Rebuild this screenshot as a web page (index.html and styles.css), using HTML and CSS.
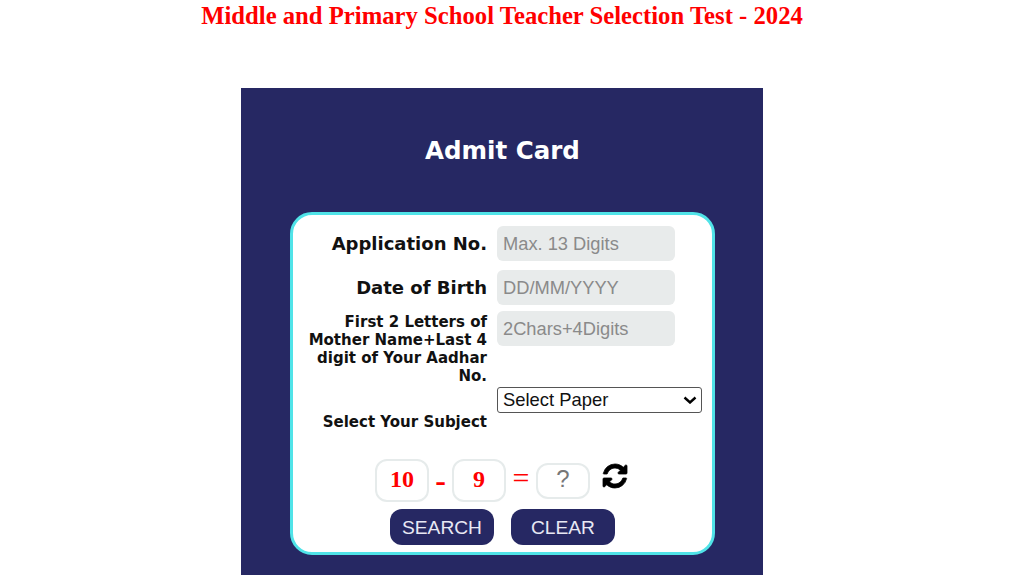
FILE: index.html
```html
<!DOCTYPE html>
<html lang="en">
<head>
  <meta charset="UTF-8" />
  <meta name="viewport" content="width=device-width, initial-scale=1.0"/>
  <title>Admit Card</title>
  <link rel="stylesheet" href="styles.css">
</head>
<body>

  <h1 class="test-title">Middle and Primary School Teacher Selection Test - 2024</h1>

  <div class="panel">
    <h2 class="panel-title">Admit Card</h2>

    <form class="login-box">
      <div class="field field-app">
        <label>Application No.</label>
        <input type="text" placeholder="Max. 13 Digits">
      </div>
      <div class="field field-dob">
        <label>Date of Birth</label>
        <input type="text" placeholder="DD/MM/YYYY">
      </div>
      <div class="field field-pass">
        <label class="small">First 2 Letters of Mother Name+Last 4 digit of Your Aadhar No.</label>
        <input type="text" placeholder="2Chars+4Digits">
      </div>
      <div class="field field-subject">
        <label class="small">Select Your Subject</label>
        <div class="select-wrap">
          <select>
            <option>Select Paper</option>
          </select>
          <svg class="select-arrow" viewBox="0 0 14 8" aria-hidden="true">
            <path d="M1.5 1.5 7 6.5l5.5-5"/>
          </svg>
        </div>
      </div>

      <div class="captcha">
        <span class="cap-num">10</span>
        <span class="cap-op">-</span>
        <span class="cap-num">9</span>
        <span class="cap-eq">=</span>
        <input class="cap-answer" type="text" placeholder="?">
        <svg class="cap-refresh" viewBox="0 0 1792 1792" aria-hidden="true">
          <path d="M1639 1056q0 5-1 7-64 268-268 434.5t-478 166.5q-146 0-282.5-55t-243.5-157l-129 129q-19 19-45 19t-45-19-19-45v-448q0-26 19-45t45-19h448q26 0 45 19t19 45-19 45l-137 137q71 66 161 102t187 36q134 0 250-65t186-179q11-17 53-117 8-23 30-23h192q13 0 22.5 9.5t9.5 22.5zm25-800v448q0 26-19 45t-45 19h-448q-26 0-45-19t-19-45 19-45l138-138q-148-137-349-137-134 0-250 65t-186 179q-11 17-53 117-8 23-30 23h-199q-13 0-22.5-9.5t-9.5-22.5v-7q65-268 270-434.5t480-166.5q146 0 284 55.5t245 156.5l130-129q19-19 45-19t45 19 19 45z"/>
        </svg>
      </div>

      <div class="actions">
        <button type="button">SEARCH</button>
        <button type="button">CLEAR</button>
      </div>
    </form>
  </div>

</body>
</html>
```

FILE: styles.css
```css
* {
  margin: 0;
  padding: 0;
  box-sizing: border-box;
}

body {
  width: 1004px;
  background: #fff;
  font-family: "Liberation Sans", Arial, sans-serif;
}

.test-title {
  font-family: "Liberation Serif", "Times New Roman", serif;
  font-size: 24.7px;
  font-weight: bold;
  line-height: 32px;
  color: #ff0000;
  text-align: center;
  height: 88px;
}

.panel {
  width: 522px;
  margin: 0 auto;
  padding: 47px 48px 40px 49px;
  background: #262863;
}

.panel-title {
  font-family: "DejaVu Sans", Verdana, sans-serif;
  font-size: 24.5px;
  font-weight: bold;
  line-height: 32px;
  color: #fff;
  text-align: center;
  margin-bottom: 45px;
}

.login-box {
  height: 343px;
  padding-top: 11px;
  background: #fff;
  border: 3px solid #50e3e8;
  border-radius: 22px;
}

.field {
  display: flex;
  align-items: flex-start;
  gap: 10px;
  padding-right: 10px;
}

.field label {
  width: 194px;
  flex-shrink: 0;
  font-family: "DejaVu Sans", Verdana, sans-serif;
  font-size: 18px;
  font-weight: bold;
  line-height: 35px;
  color: #111;
  text-align: right;
}

.field label.small {
  padding-top: 2px;
  font-size: 15px;
  line-height: 18px;
}

.field input {
  width: 178px;
  height: 35px;
  padding: 0 6px;
  border: 0;
  border-radius: 6px;
  background: #e8ebeb;
  font-family: "Liberation Sans", Arial, sans-serif;
  font-size: 18.3px;
}

.field input::placeholder {
  color: #8a8a8a;
  opacity: 1;
}

.field-app {
  margin-bottom: 9px;
}

.field-dob {
  margin-bottom: 6px;
}

.field-pass {
  height: 76px;
}

.field-subject label.small {
  padding-top: 26px;
}

.select-wrap {
  position: relative;
  width: 205px;
  height: 26px;
}

.field select {
  appearance: none;
  width: 100%;
  height: 100%;
  padding: 0 0 2px 5px;
  border: 1px solid #555;
  border-radius: 3px;
  background: #fff;
  font-family: "Liberation Sans", Arial, sans-serif;
  font-size: 18.4px;
  color: #111;
}

.select-arrow {
  position: absolute;
  top: 9px;
  right: 5px;
  width: 14px;
  height: 8px;
  fill: none;
  stroke: #000;
  stroke-width: 2.4;
  pointer-events: none;
}

.captcha {
  display: flex;
  align-items: center;
  margin: 28px 0 7px 82px;
  height: 43px;
}

.cap-num {
  width: 54px;
  height: 43px;
  border: 2px solid #e6ebeb;
  border-radius: 12px;
  font-family: "Liberation Serif", "Times New Roman", serif;
  font-size: 24px;
  font-weight: bold;
  line-height: 36px;
  color: #ff0000;
  text-align: center;
}

.cap-op {
  width: 23px;
  font-family: "Liberation Serif", "Times New Roman", serif;
  font-size: 32px;
  font-weight: bold;
  color: #ff0000;
  text-align: center;
}

.cap-eq {
  width: 30px;
  font-family: "Liberation Serif", "Times New Roman", serif;
  font-size: 30px;
  color: #ff0000;
  text-align: center;
  margin-top: -5px;
}

.cap-answer {
  width: 54px;
  height: 36px;
  padding-bottom: 3px;
  border: 2px solid #e6ebeb;
  border-radius: 12px;
  font-family: "Liberation Sans", Arial, sans-serif;
  font-size: 24px;
  text-align: center;
}

.cap-answer::placeholder {
  color: #777;
  opacity: 1;
}

.cap-refresh {
  width: 28px;
  height: 28px;
  margin: -9px 0 0 11px;
  fill: #000;
  stroke: #000;
  stroke-width: 50;
}

.actions {
  display: flex;
  gap: 17px;
  margin-left: 97px;
}

.actions button {
  width: 104px;
  height: 36px;
  padding-top: 1px;
  border: 0;
  border-radius: 12px;
  background: #262863;
  font-family: "Liberation Sans", Arial, sans-serif;
  font-size: 19.2px;
  color: #e8e8f4;
}
```
